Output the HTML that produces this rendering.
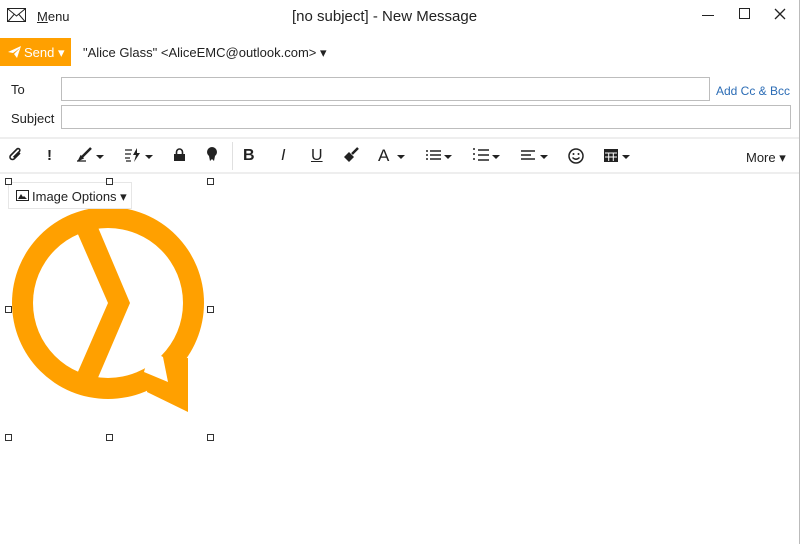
<!DOCTYPE html>
<html><head><meta charset="utf-8"><style>
*{margin:0;padding:0;box-sizing:border-box}
body{width:800px;height:544px;background:#fff;font-family:"Liberation Sans",sans-serif;color:#222;position:relative;overflow:hidden;font-size:13px}
.a{position:absolute}
.inp{position:absolute;border:1px solid #bdbdbd;background:#fff}
.h{position:absolute;width:7px;height:7px;border:1px solid #333;background:#fff}
.ic{position:absolute;top:147px;font-size:15px;color:#222}
.dd{position:absolute;top:155px;width:0;height:0;border-left:4px solid transparent;border-right:4px solid transparent;border-top:4px solid #222}
</style></head><body>
<svg class="a" style="left:7px;top:8px" width="20" height="15"><rect x="0.5" y="0.5" width="18" height="13" fill="none" stroke="#222"/><path d="M1 1L9.5 8L18 1M1 13.5L7 6.5M18 13.5L12 6.5" fill="none" stroke="#222"/></svg>
<div class="a" style="left:37px;top:9px;font-size:13px"><u>M</u>enu</div>
<div class="a" style="left:292px;top:8px;font-size:15px">[no subject] - New Message</div>
<div class="a" style="left:702px;top:15px;width:12px;height:1px;background:#222"></div>
<div class="a" style="left:739px;top:8px;width:11px;height:11px;border:1px solid #222"></div>
<svg class="a" style="left:774px;top:8px" width="12" height="12"><path d="M1 1L11 11M11 1L1 11" stroke="#222" stroke-width="1.3"/></svg>
<div class="a" style="left:0;top:38px;width:71px;height:28px;background:#ffa000"></div>
<svg class="a" style="left:8px;top:46px" width="14" height="12"><path d="M0 6L13 0L9 12L6 8L12 2L5 7Z" fill="#fff"/></svg>
<div class="a" style="left:24px;top:45px;color:#fff;font-size:13px">Send ▾</div>
<div class="a" style="left:83px;top:45px;font-size:13px">"Alice Glass" &lt;AliceEMC@outlook.com&gt; ▾</div>
<div class="a" style="left:11px;top:82px">To</div>
<div class="inp" style="left:61px;top:77px;width:649px;height:24px"></div>
<div class="a" style="left:716px;top:84px;color:#2b6cb5;font-size:12px">Add Cc &amp; Bcc</div>
<div class="a" style="left:11px;top:111px">Subject</div>
<div class="inp" style="left:61px;top:105px;width:730px;height:24px"></div>
<div class="a" style="left:0;top:137px;width:800px;height:2px;background:#eee"></div>
<div class="a" style="left:0;top:172px;width:800px;height:2px;background:#eee"></div>
<div class="a" style="left:232px;top:142px;width:1px;height:28px;background:#e0e0e0"></div>
<svg class="a" style="left:9px;top:147px" width="14" height="16"><path d="M11 6L5 12a2.5 2.5 0 0 1-3.5-3.5L8 2a1.7 1.7 0 0 1 2.4 2.4L4.5 10.3" fill="none" stroke="#222" stroke-width="1.6"/></svg>
<div class="ic" style="left:47px;font-weight:bold">!</div>
<svg class="a" style="left:77px;top:147px" width="16" height="16"><path d="M4 11L14 1M3 12l2-1-1-1z" stroke="#222" stroke-width="2.5" fill="none"/><path d="M0 14H9" stroke="#222" stroke-width="1.3"/></svg><div class="dd" style="left:96px"></div>
<svg class="a" style="left:125px;top:148px" width="16" height="14"><path d="M0 2H7M0 6H6M0 10H5M1 13H6" stroke="#222" stroke-width="1.3"/><path d="M12 0L8 7H11L9 14L15 5H12Z" fill="#222"/></svg><div class="dd" style="left:145px"></div>
<svg class="a" style="left:174px;top:148px" width="11" height="13"><path d="M2.5 6V4a3 3 0 0 1 6 0V6" fill="none" stroke="#222" stroke-width="1.6"/><rect x="0" y="6" width="11" height="7" fill="#222"/></svg>
<svg class="a" style="left:206px;top:147px" width="12" height="15"><circle cx="6" cy="5" r="5" fill="#222"/><path d="M3 9L4 14L6 12L8 14L9 9Z" fill="#222"/></svg>
<div class="ic" style="left:243px;font-weight:bold;font-size:16px">B</div>
<div class="ic" style="left:281px;font-style:italic;font-size:16px">I</div>
<div class="ic" style="left:311px;text-decoration:underline;font-size:16px">U</div>
<svg class="a" style="left:343px;top:147px" width="16" height="16"><path d="M9 7L15 1" stroke="#222" stroke-width="2.5"/><path d="M6 5L11 10L6 15L1 10Z" fill="#222"/></svg>
<div class="ic" style="left:378px;font-size:17px;top:146px">A</div><div class="dd" style="left:397px"></div>
<svg class="a" style="left:426px;top:150px" width="15" height="11"><path d="M0 1H2M4 1H15M0 5H2M4 5H15M0 9H2M4 9H15" stroke="#222" stroke-width="1.6"/></svg><div class="dd" style="left:444px"></div>
<svg class="a" style="left:473px;top:148px" width="16" height="14"><path d="M0 1H2M0 6H2M0 11H2M5 2H16M5 7H16M5 12H16" stroke="#222" stroke-width="1.6"/></svg><div class="dd" style="left:492px"></div>
<svg class="a" style="left:521px;top:150px" width="15" height="11"><path d="M0 1H14M0 5H10M0 9H14" stroke="#222" stroke-width="1.5"/></svg><div class="dd" style="left:540px"></div>
<svg class="a" style="left:568px;top:148px" width="16" height="16"><circle cx="8" cy="8" r="7" fill="none" stroke="#222" stroke-width="1.5"/><circle cx="5.5" cy="6" r="1" fill="#222"/><circle cx="10.5" cy="6" r="1" fill="#222"/><path d="M4.5 9.5Q8 13 11.5 9.5" fill="none" stroke="#222" stroke-width="1.3"/></svg>
<svg class="a" style="left:604px;top:149px" width="14" height="13"><rect x="0" y="0" width="14" height="13" fill="#222"/><path d="M1 4H13M1 8H13M4.7 4V12M9.3 4V12" stroke="#fff" stroke-width="1"/></svg><div class="dd" style="left:622px"></div>
<div class="a" style="left:746px;top:150px;font-size:13px">More ▾</div>
<svg class="a" style="left:0;top:0" width="230" height="450">
<circle cx="108" cy="303" r="96" fill="#ffa000"/>
<polygon points="188,358 188,412 147,392 150,360" fill="#ffa000"/>
<circle cx="108" cy="303" r="75" fill="#fff"/>
<polygon points="163,357 168,382 144,372 150,350" fill="#fff"/>
<polygon points="77,232 97,225 130,303 97,380 77,374 108,303" fill="#ffa000"/>
</svg>
<div class="a" style="left:8px;top:182px;width:124px;height:27px;background:#fff;border:1px solid #e6e6e6"></div>
<svg class="a" style="left:16px;top:190px" width="13" height="11"><rect x="0.5" y="0.5" width="12" height="10" fill="none" stroke="#222"/><path d="M2 9L5 4L7 7L8 6L11 9Z" fill="#222"/></svg>
<div class="a" style="left:32px;top:189px;font-size:13px">Image Options ▾</div>
<div class="h" style="left:5px;top:178px"></div><div class="h" style="left:106px;top:178px"></div><div class="h" style="left:207px;top:178px"></div>
<div class="h" style="left:5px;top:306px"></div><div class="h" style="left:207px;top:306px"></div>
<div class="h" style="left:5px;top:434px"></div><div class="h" style="left:106px;top:434px"></div><div class="h" style="left:207px;top:434px"></div>
<div class="a" style="right:0;top:0;width:1px;height:544px;background:#bbb"></div>
</body></html>
